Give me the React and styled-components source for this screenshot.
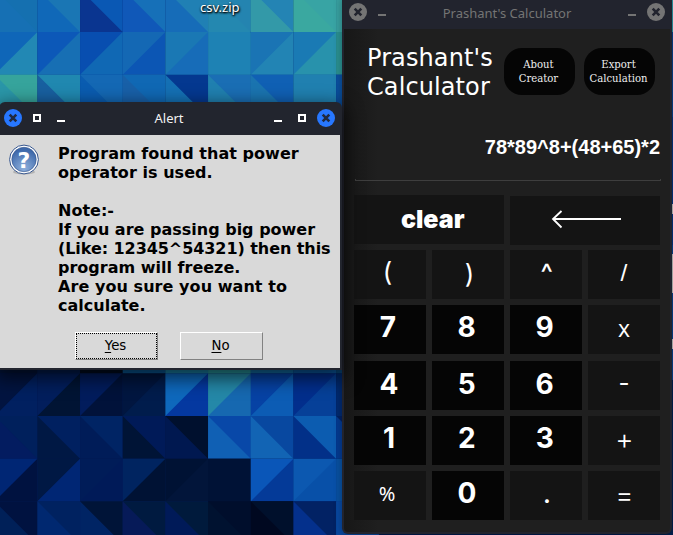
import React from 'react';
import styled, { createGlobalStyle, css } from 'styled-components';

const GlobalStyle = createGlobalStyle`
  *, *::before, *::after { box-sizing: border-box; }
  body { margin: 0; overflow: hidden; background: #001a50; }
`;

/* Wallpaper mosaic: each tile is [left colour, right colour]; rows alternate diagonal direction. */
const T = 42.67;
const mosaic = [
  { row: 0, dir: '\\', tiles: ['1670b4 1570b0', '1068b8 1a76b4', '0a3590 0a58b4', '1058b8 1670b8', '166cb8 2080b4', '2488b0 2484b0', '3399a8 2484b4', '3aa8a0 38a4a4', '38a0a0 38a0a0'] },
  { row: 1, dir: '/', tiles: ['0f66b8 2288b4', '0c58b8 176fb4', '084eb0 1068b4', '1468b4 0c56b4', '1a78b4 176cb8', '1e82b4 1e82b4', '1a74b4 2284b4', '1a7ab4 2892ac', '2a9090 2a9090'] },
  { row: 2, dir: '\\', tiles: ['2a96a8 36a49c', '1860a0 2088b0', '0a5cb0 1468b4', '1860a8 1068b4', '1470b4 043890', '2080b0 1a6eb4', '1a74b0 1060b4', '2080b0 2080b0', '0a50a0 0a50a0'] },
  { row: 8, dir: '/', tiles: ['02143a 02143a', '021c50 021c50', '010c20 010c20', '0a5a98 0a5a98', '1c84a8 1c84a8', '2a98a0 2a98a0', '1470a8 1470a8', '0c5ca4 0c5ca4', '0a4c80 0a4c80'] },
  { row: 9, dir: '/', tiles: ['021440 012060', '021e5c 011434', '021c5c 01123a', '011640 001c4c', '0e68bc 0438a0', '2488a8 1668b0', '0642a4 0c5cb4', '022e8c 064098', '022a70 022a70'] },
  { row: 10, dir: '\\', tiles: ['031c60 00205c', '001844 002060', '001c58 002464', '001436 001a58', '001850 00102e', '1060b4 0848a8', '1264b4 0848a0', '023088 0c5cb0', '043a90 022060'] },
  { row: 11, dir: '/', tiles: ['002674 001240', '001844 002674', '001c58 001a58', '002460 001234', '001234 02153a', '001236 001236', '0a56b8 043a98', '0c58b0 0850a8', '0850a0 0850a0'] },
  { row: 12, dir: '\\', tiles: ['002058 001240', '002870 002260', '002464 001438', '061a58 001a40', '001a58 001a3c', '001230 000e2c', '000820 00102c', '04308c 022264', '0848a0 0848a0'] },
];

const Desktop = styled.main`
  position: relative;
  width: 673px;
  height: 535px;
  overflow: hidden;
`;

const WallpaperSvg = styled.svg`
  position: absolute;
  inset: 0;
`;

const FileLabel = styled.span`
  position: absolute;
  left: 200px;
  top: 0;
  font: 13px/14px 'Noto Sans', sans-serif;
  color: #fff;
  text-shadow: 1px 1px 2px #000, 0 1px 2px #000;
`;

const Window = styled.section`
  position: absolute;
  display: flex;
  flex-direction: column;
`;

const AlertWindow = styled(Window)`
  left: -1px;
  top: 102px;
  width: 343px;
  height: 268px;
  padding: 0 2px 2px 1px;
  background: #22252e;
  border-radius: 6px 6px 0 0;
  box-shadow: 0 6px 18px 3px rgba(0, 0, 0, 0.6);
`;

const CalcWindow = styled(Window)`
  left: 342px;
  top: -4px;
  width: 330px;
  height: 538px;
  padding: 0 2px 2px;
  background: #22242e;
  border-radius: 0 0 6px 6px;
  box-shadow: 0 2px 8px rgba(0, 0, 0, 0.3);
`;

const TitleBar = styled.header`
  display: flex;
  align-items: center;
  flex: none;
  height: 33px;
  color: ${(p) => (p.$dim ? '#747474' : '#f2f2f2')};
`;

const WindowTitle = styled.h2`
  flex: 1;
  margin: 0;
  text-align: center;
  font: 400 13px/18px 'Noto Sans', sans-serif;
`;

const AlertTitle = styled(WindowTitle)`
  padding: 0 2px 1px 0;
`;

const ControlsSvg = styled.svg`
  flex: none;
`;

const AlertBody = styled.div`
  flex: 1;
  display: flex;
  flex-direction: column;
  background: #d9d9d9;
`;

const MessageRow = styled.div`
  display: flex;
  padding: 9px 0 0 8px;
`;

const Message = styled.p`
  margin: 0 0 0 18px;
  font: bold 16px/19px 'DejaVu Sans', sans-serif;
  color: #000;
`;

const MessageLine = styled.span`
  display: block;
  min-height: 19px;
  white-space: pre;
  letter-spacing: ${(p) => p.$tracking || 0}px;
`;

const DialogActions = styled.div`
  display: flex;
  gap: 22px;
  padding: 17px 0 0 75px;
`;

const DialogButton = styled.button`
  width: 83px;
  height: 28px;
  padding: 0 2px 0 0;
  border: 1px solid;
  border-color: #fff #828282 #828282 #fff;
  background: #d9d9d9;
  font: 13.3px/16px 'DejaVu Sans', sans-serif;
  color: #000;
  ${(p) => p.$focused && css`
    outline: 1px dotted #000;
    outline-offset: -2px;
  `}
`;

const Mnemonic = styled.span`
  text-decoration: underline;
  text-underline-offset: 2px;
`;

const CalcBody = styled.div`
  flex: 1;
  display: flex;
  flex-direction: column;
  padding: 14px 10px 0;
  border-radius: 0 0 4px 4px;
  background: linear-gradient(90deg, #171717 0, #1f1f1f 34px);
`;

const CalcHeader = styled.div`
  display: flex;
  height: 58px;
  padding: 0 5px 0 13px;
`;

const CalcTitle = styled.h1`
  width: 137px;
  margin: 0;
  padding-top: 1px;
  white-space: pre;
  font: 400 24px/29px 'DejaVu Sans', sans-serif;
  letter-spacing: 0.1px;
  color: #fff;
`;

const PillButton = styled.button`
  width: 71px;
  height: 47px;
  margin: 5px 9px 0 0;
  padding: 0 2px 0 0;
  border: 0;
  border-radius: 18px;
  background: #050505;
  white-space: pre;
  font: 11.2px/14px 'DejaVu Serif Condensed', 'DejaVu Serif', serif;
  font-stretch: semi-condensed;
  color: #eee;
  &:last-child { margin-right: 0; }
`;

const Display = styled.output`
  height: 78px;
  padding: 34px 0 0;
  text-align: right;
  font: bold 20px/24px 'Liberation Sans', sans-serif;
  color: #fff;
`;

const Divider = styled.div`
  height: 2px;
  margin: 0 -1px 0 1px;
  border: solid #3e3e3e;
  border-width: 0 1px 1px;
`;

const Keypad = styled.div`
  display: grid;
  grid-template-columns: repeat(4, 72px);
  grid-auto-rows: 49px;
  gap: 6px;
  margin-top: 14px;
`;

const Key = styled.button`
  display: block;
  height: 49px;
  margin: ${(p) => p.$drop || 0}px 0 0;
  padding: 0;
  border: 0;
  grid-column: span ${(p) => p.$span || 1};
  background: ${(p) => (p.$digit ? '#050505' : '#141414')};
`;

const KeySvg = styled.svg`
  display: block;
  fill: #fff;
  text-anchor: middle;
  font-family: Inter, sans-serif;
`;

/* Glyph placement inside each key: x is the centre, y the baseline. */
const keys = [
  { t: 'clear', span: 2, x: 78.7, y: 33, size: 25, weight: 900 },
  { arrow: true, span: 2, drop: 1 },
  { t: '(', x: 33.5, y: 31, size: 26, weight: 400 },
  { t: ')', x: 37.5, y: 33, size: 26, weight: 400 },
  { t: '^', x: 36.7, y: 32, size: 26, weight: 500 },
  { t: '/', x: 36, y: 31, size: 24.5, weight: 400, family: 'Liberation Sans' },
  { t: '7', digit: true, x: 34, y: 32, size: 28, weight: 700 },
  { t: '8', digit: true, x: 34.7, y: 32, size: 28, weight: 700 },
  { t: '9', digit: true, x: 34.7, y: 32, size: 28, weight: 700 },
  { t: 'x', x: 36, y: 32, size: 23, weight: 400, family: 'Open Sans' },
  { t: '4', digit: true, drop: 1, x: 35, y: 32.5, size: 28, weight: 700 },
  { t: '5', digit: true, drop: 1, x: 34.7, y: 32.5, size: 28, weight: 700 },
  { t: '6', digit: true, drop: 1, x: 34.7, y: 32.5, size: 28, weight: 700 },
  { t: '-', drop: 1, x: 36, y: 30, size: 24, weight: 400 },
  { t: '1', digit: true, drop: 1, x: 35, y: 32, size: 28, weight: 700 },
  { t: '2', digit: true, drop: 1, x: 34.7, y: 32, size: 28, weight: 700 },
  { t: '3', digit: true, drop: 1, x: 34.7, y: 32, size: 28, weight: 700 },
  { t: '+', drop: 1, x: 36.5, y: 33, size: 28, weight: 300 },
  { t: '%', drop: 1, x: 33, y: 30, size: 20, weight: 400, family: 'Noto Sans' },
  { t: '0', digit: true, drop: 1, x: 35, y: 32, size: 28, weight: 700 },
  { t: '.', drop: 1, x: 37, y: 32, size: 26, weight: 500 },
  { t: '=', drop: 1, x: 36.5, y: 34, size: 28, weight: 300 },
];

const alertLines = [
  { text: 'Program found that power', tracking: 0.04 },
  { text: 'operator is used.', tracking: 0.04 },
  { text: '' },
  { text: 'Note:-' },
  { text: 'If you are passing big power' },
  { text: '(Like: 12345^54321) then this', tracking: -0.07 },
  { text: 'program will freeze.' },
  { text: 'Are you sure you want to', tracking: 0.06 },
  { text: 'calculate.' },
];

function Wallpaper() {
  return (
    <WallpaperSvg width="673" height="535" aria-hidden="true">
      {mosaic.map(({ row, dir, tiles }) => tiles.map((pair, i) => {
        const [a, b] = pair.split(' ');
        const x = -5.3 + i * T;
        const y = -10.67 + row * T;
        const half = dir === '/'
          ? `M${x} ${y + T}L${x + T} ${y}V${y + T}Z`
          : `M${x} ${y}H${x + T}V${y + T}Z`;
        return (
          <g key={`${row}-${i}`}>
            <rect x={x} y={y} width={T} height={T} fill={`#${a}`} />
            <path d={half} fill={`#${b}`} />
          </g>
        );
      }))}
      <rect x="660" width="13" height="32" fill="#2a9aa8" />
      <rect x="660" y="32" width="13" height="503" fill="#06408c" />
      <rect x="660" y="117" width="13" height="128" fill="#043480" />
      <rect x="660" y="380" width="13" height="155" fill="#022050" />
      <path d="M671 204h2v10h-2zM671 254h2v39h-2zM671 339h2v10h-2z" fill="#bbb" />
    </WallpaperSvg>
  );
}

function CloseMark({ cx, cy = 16, disc, mark }) {
  return (
    <g>
      <circle cx={cx} cy={cy} r="9" fill={disc} />
      <path d={`M${cx - 3.3} ${cy - 3.3}l6.6 6.6m0-6.6l-6.6 6.6`} stroke={mark} strokeWidth="2.6" />
    </g>
  );
}

function QuestionIcon() {
  return (
    <svg width="32" height="32" viewBox="0 0 32 32" role="img" aria-label="Question">
      <defs>
        <radialGradient id="question-disc" cx="50%" cy="85%" r="75%">
          <stop offset="0" stopColor="#8fb0dc" />
          <stop offset="1" stopColor="#3d68aa" />
        </radialGradient>
      </defs>
      <ellipse cx="16" cy="28" rx="11" ry="2.5" fill="#999" opacity="0.6" />
      <circle cx="16" cy="15.5" r="14.4" fill="#fff" stroke="#34548c" strokeWidth="1" />
      <circle cx="16" cy="15.5" r="12.2" fill="url(#question-disc)" stroke="#34548c" strokeWidth="0.6" />
      <text x="16" y="23.500" textAnchor="middle" fontFamily="DejaVu Sans" fontWeight="bold" fontSize="22" fill="#fff">?</text>
    </svg>
  );
}

function AlertDialog() {
  return (
    <AlertWindow>
      <TitleBar>
        <ControlsSvg width="72" height="33">
          <CloseMark cx={13} disc="#2777ff" mark="#202a40" />
          <rect x="34" y="13" width="6" height="6" fill="none" stroke="#fff" strokeWidth="2" />
          <rect x="57" y="18" width="8" height="2" fill="#fff" />
        </ControlsSvg>
        <AlertTitle>Alert</AlertTitle>
        <ControlsSvg width="72" height="33">
          <rect x="6" y="18" width="8" height="2" fill="#fff" />
          <rect x="31" y="13" width="6" height="6" fill="none" stroke="#fff" strokeWidth="2" />
          <CloseMark cx={58} disc="#2777ff" mark="#202a40" />
        </ControlsSvg>
      </TitleBar>
      <AlertBody>
        <MessageRow>
          <QuestionIcon />
          <Message>
            {alertLines.map((line, i) => (
              <MessageLine key={i} $tracking={line.tracking}>{line.text}</MessageLine>
            ))}
          </Message>
        </MessageRow>
        <DialogActions>
          <DialogButton $focused><Mnemonic>Y</Mnemonic>es</DialogButton>
          <DialogButton><Mnemonic>N</Mnemonic>o</DialogButton>
        </DialogActions>
      </AlertBody>
    </AlertWindow>
  );
}

function CalcKey({ k }) {
  const width = k.span ? 150 : 72;
  return (
    <Key $span={k.span} $digit={k.digit} $drop={k.drop}>
      <KeySvg width={width} height="49">
        {k.arrow
          ? <path d="M111 23H43M51.500 15L43 23L51.500 31.500" fill="none" stroke="#fff" strokeWidth="1.8" />
          : <text x={k.x} y={k.y} fontSize={k.size} fontWeight={k.weight} fontFamily={k.family}>{k.t}</text>}
      </KeySvg>
    </Key>
  );
}

function Calculator() {
  return (
    <CalcWindow>
      <TitleBar $dim>
        <ControlsSvg width="64" height="33">
          <CloseMark cx={14} disc="#747474" mark="#22242e" />
          <rect x="34" y="18" width="8" height="2" fill="#747474" />
        </ControlsSvg>
        <WindowTitle>Prashant's Calculator</WindowTitle>
        <ControlsSvg width="64" height="33">
          <rect x="22" y="18" width="8" height="2" fill="#747474" />
          <CloseMark cx={50} disc="#747474" mark="#22242e" />
        </ControlsSvg>
      </TitleBar>
      <CalcBody>
        <CalcHeader>
          <CalcTitle>{"Prashant's\nCalculator"}</CalcTitle>
          <PillButton>{'About\nCreator'}</PillButton>
          <PillButton>{'Export\nCalculation'}</PillButton>
        </CalcHeader>
        <Display>78*89^8+(48+65)*2</Display>
        <Divider />
        <Keypad>
          {keys.map((k, i) => <CalcKey key={i} k={k} />)}
        </Keypad>
      </CalcBody>
    </CalcWindow>
  );
}

export default function App() {
  return (
    <Desktop>
      <GlobalStyle />
      <Wallpaper />
      <FileLabel>csv.zip</FileLabel>
      <Calculator />
      <AlertDialog />
    </Desktop>
  );
}
